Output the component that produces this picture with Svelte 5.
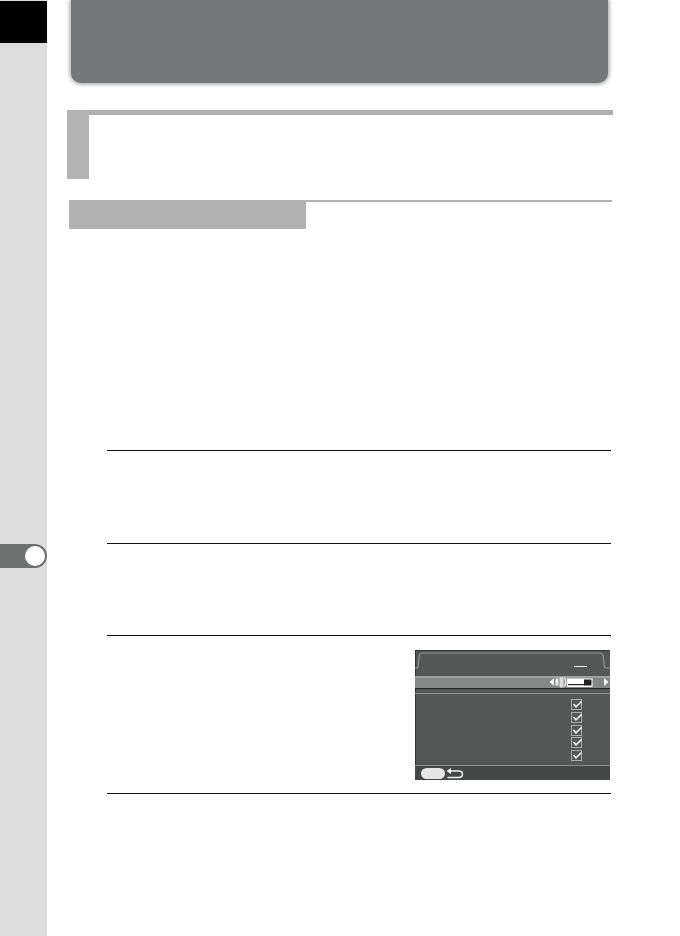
<script>
  const rows = [0, 1, 2, 3, 4];
</script>

<div class="page">
  <aside class="side">
    <div class="black"></div>
    <div class="tab"><span class="dot"></span></div>
  </aside>
  <main class="main">
    <div class="banner"></div>
    <section class="heading">
      <div class="block"></div>
      <div class="topline"></div>
    </section>
    <section class="sub"><div class="subfill"></div><div class="subline"></div></section>
    <div class="step s1"></div>
    <div class="step s2"></div>
    <div class="step s3">
      <div class="screen">
        <div class="tabs">
          <svg class="tabshape" width="195" height="20" viewBox="0 0 195 20">
            <path d="M0 18 H1.500 Q3 18 3.300 15 L4 7 Q4.400 3 8 3 H184 Q188 3 188.400 7 L189 15 Q189.300 18 191 18 H195" fill="none" stroke="#929292" stroke-width="1.200"/>
          </svg>
          <span class="dash"></span>
        </div>
        <div class="hl">
          <svg class="slider" width="60" height="12" viewBox="0 0 60 12">
            <path d="M6 2 L1.500 6 L6 10Z" fill="#f5f5f5"/>
            <rect x="7.500" y="2.500" width="3" height="7" fill="#ececec"/>
            <rect x="11.500" y="1" width="4" height="10.500" rx="1.500" fill="#dcdcdc"/>
            <path d="M16.500 1.500 Q18.800 6 16.500 10.500" stroke="#f0f0f0" stroke-width="1.500" fill="none"/>
            <rect x="19" y="2.500" width="25.500" height="8.500" fill="#fff"/>
            <rect x="36" y="3.500" width="7.500" height="6" fill="#222"/>
            <rect x="20" y="8" width="16" height="1.200" fill="#222"/>
            <path d="M56 2 L60.500 6 L56 10Z" fill="#f5f5f5"/>
          </svg>
        </div>
        <div class="rule"></div>
        <div class="checks">
          {#each rows as r (r)}
            <div class="check">
              <svg width="12" height="12" viewBox="0 0 12 12">
                <rect x="0.500" y="0.500" width="10" height="10" fill="none" stroke="#adadad"/>
                <path d="M2.500 5 L5 7.800 L10.500 2.500" fill="none" stroke="#f5f5f5" stroke-width="1.600"/>
              </svg>
            </div>
          {/each}
        </div>
        <div class="foot">
          <span class="pill"></span>
          <svg width="18" height="11" viewBox="0 0 18 11">
            <path d="M0.500 3 L5 0 L5 6Z" fill="#f2f2f2"/>
            <path d="M4 3 H12.500 Q16.500 3 16.500 6 Q16.500 9.500 12.500 9.500 H1.500" fill="none" stroke="#f2f2f2" stroke-width="1.500"/>
          </svg>
        </div>
      </div>
    </div>
    <div class="step s4"></div>
  </main>
</div>

<style>
  :global(body) { margin: 0; background: #fff; }
  .page { display: flex; width: 680px; height: 936px; overflow: hidden; background: #fff; }
  .side { width: 47px; flex: none; background: #dcdcdc; display: flex; flex-direction: column; }
  .black { height: 42px; margin-top: 1px; background: #000; }
  .tab { margin-top: 501px; height: 24px; background: #6f7070; border-radius: 0 12px 12px 0; display: flex; align-items: center; justify-content: flex-end; padding-right: 2px; flex: none; }
  .dot { width: 20px; height: 20px; border-radius: 50%; background: #fff; }
  .main { flex: 1; min-width: 0; display: flex; flex-direction: column; }
  .banner { margin-left: 24px; width: 537px; height: 83px; background: #767778; border-radius: 0 0 10px 10px; box-shadow: 0 0 4px 1px #9a9b9b; flex: none; }
  .heading { margin-left: 20px; width: 546px; height: 69px; margin-top: 27px; display: flex; flex: none; }
  .block { width: 22px; height: 69px; background: #b4b4b4; }
  .topline { flex: 1; height: 5px; background: #b0b0b0; }
  .sub { margin-left: 22px; width: 543px; height: 29px; margin-top: 21px; display: flex; flex: none; }
  .subfill { width: 237px; background: #b2b2b2; }
  .subline { flex: 1; height: 2px; background: #b2b2b2; }
  .step { margin-left: 60px; width: 504px; border-top: 1px solid #111; flex: none; }
  .s1 { margin-top: 221px; height: 92px; }
  .s2 { height: 91px; }
  .s3 { height: 157px; display: flex; justify-content: flex-end; align-items: flex-start; }
  .screen { margin-top: 14px; margin-right: 1px; width: 195px; height: 130px; box-sizing: border-box; background: #555757; display: flex; flex-direction: column; box-shadow: inset 1px 1px 0 #333; }
  .tabs { height: 26px; position: relative; flex: none; }
  .tabshape { position: absolute; left: 0; top: 0; display: block; }
  .dash { position: absolute; left: 159px; top: 16px; width: 13px; height: 1px; background: #eee; }
  .hl { height: 12px; background: linear-gradient(#a0a1a1 0 2px, #858686 2px); border-bottom: 1px solid #222; display: flex; justify-content: flex-end; flex: none; padding-right: 2px; }
  .slider { display: block; }
  .rule { height: 1px; margin-top: 4px; background: #8f8f8f; flex: none; }
  .checks { display: flex; flex-direction: column; align-items: flex-end; padding: 5px 27px 0 0; height: 66px; box-sizing: content-box; flex: none; }
  .check { height: 12.750px; }
  .check svg { display: block; overflow: visible; }
  .foot { flex: 1; background: #454646; border-top: 1px solid #8f8f8f; display: flex; align-items: center; padding-left: 6px; min-height: 0; }
  .pill { width: 24px; height: 11px; border-radius: 6px; background: #e6e6e6; }
  .foot svg { display: block; margin-left: 1px; }
</style>
